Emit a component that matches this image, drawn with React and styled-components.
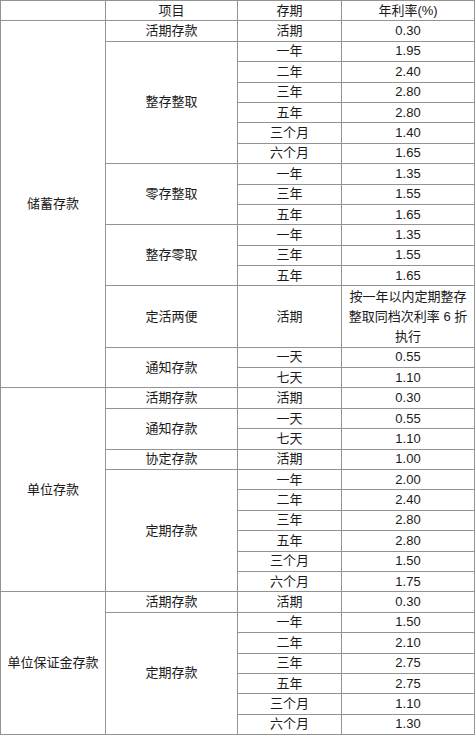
import styled, { createGlobalStyle } from "styled-components";

const GlobalStyle = createGlobalStyle`
  html, body {
    margin: 0;
    padding: 0;
    background: #fff;
  }
  body {
    font-family: "Liberation Sans", "Noto Sans CJK SC", sans-serif;
    color: #1a1a1a;
  }
`;

const Table = styled.table`
  width: 474px;
  border-collapse: collapse;
  table-layout: fixed;
  font-size: 13px;
`;

const Cell = styled.td`
  border: 1px solid #939393;
  height: ${(p) => (p.$tall ? 61.2 : 20.4)}px;
  padding: 0 ${(p) => (p.$tall ? 5 : 2)}px;
  text-align: center;
  vertical-align: middle;
  line-height: ${(p) => (p.$tall ? 20 : 16)}px;
  box-sizing: border-box;
  word-break: break-all;
`;

const HeadCell = styled(Cell).attrs({ as: "th" })`
  font-weight: normal;
`;

const data = [
  {
    name: "储蓄存款",
    items: [
      { name: "活期存款", rows: [["活期", "0.30"]] },
      {
        name: "整存整取",
        rows: [
          ["一年", "1.95"],
          ["二年", "2.40"],
          ["三年", "2.80"],
          ["五年", "2.80"],
          ["三个月", "1.40"],
          ["六个月", "1.65"],
        ],
      },
      {
        name: "零存整取",
        rows: [
          ["一年", "1.35"],
          ["三年", "1.55"],
          ["五年", "1.65"],
        ],
      },
      {
        name: "整存零取",
        rows: [
          ["一年", "1.35"],
          ["三年", "1.55"],
          ["五年", "1.65"],
        ],
      },
      {
        name: "定活两便",
        tall: true,
        rows: [["活期", "按一年以内定期整存整取同档次利率 6 折执行"]],
      },
      {
        name: "通知存款",
        rows: [
          ["一天", "0.55"],
          ["七天", "1.10"],
        ],
      },
    ],
  },
  {
    name: "单位存款",
    items: [
      { name: "活期存款", rows: [["活期", "0.30"]] },
      {
        name: "通知存款",
        rows: [
          ["一天", "0.55"],
          ["七天", "1.10"],
        ],
      },
      { name: "协定存款", rows: [["活期", "1.00"]] },
      {
        name: "定期存款",
        rows: [
          ["一年", "2.00"],
          ["二年", "2.40"],
          ["三年", "2.80"],
          ["五年", "2.80"],
          ["三个月", "1.50"],
          ["六个月", "1.75"],
        ],
      },
    ],
  },
  {
    name: "单位保证金存款",
    items: [
      { name: "活期存款", rows: [["活期", "0.30"]] },
      {
        name: "定期存款",
        rows: [
          ["一年", "1.50"],
          ["二年", "2.10"],
          ["三年", "2.75"],
          ["五年", "2.75"],
          ["三个月", "1.10"],
          ["六个月", "1.30"],
        ],
      },
    ],
  },
];

const App = () => {
  const body = [];
  data.forEach((group, gi) => {
    const groupSpan = group.items.reduce((n, it) => n + it.rows.length, 0);
    group.items.forEach((item, ii) => {
      item.rows.forEach((row, ri) => (
        body.push(
          <tr key={`${gi}-${ii}-${ri}`}>
            {ii === 0 && ri === 0 && <Cell rowSpan={groupSpan}>{group.name}</Cell>}
            {ri === 0 && <Cell rowSpan={item.rows.length}>{item.name}</Cell>}
            <Cell $tall={item.tall}>{row[0]}</Cell>
            <Cell $tall={item.tall}>{row[1]}</Cell>
          </tr>
        )
      ));
    });
  });

  return (
    <>
      <GlobalStyle />
      <Table>
        <colgroup>
          <col style={{ width: 105 }} />
          <col style={{ width: 132 }} />
          <col style={{ width: 104 }} />
          <col style={{ width: 133 }} />
        </colgroup>
        <thead>
          <tr>
            <HeadCell></HeadCell>
            <HeadCell>项目</HeadCell>
            <HeadCell>存期</HeadCell>
            <HeadCell>年利率(%)</HeadCell>
          </tr>
        </thead>
        <tbody>{body}</tbody>
      </Table>
    </>
  );
};

export default App;
